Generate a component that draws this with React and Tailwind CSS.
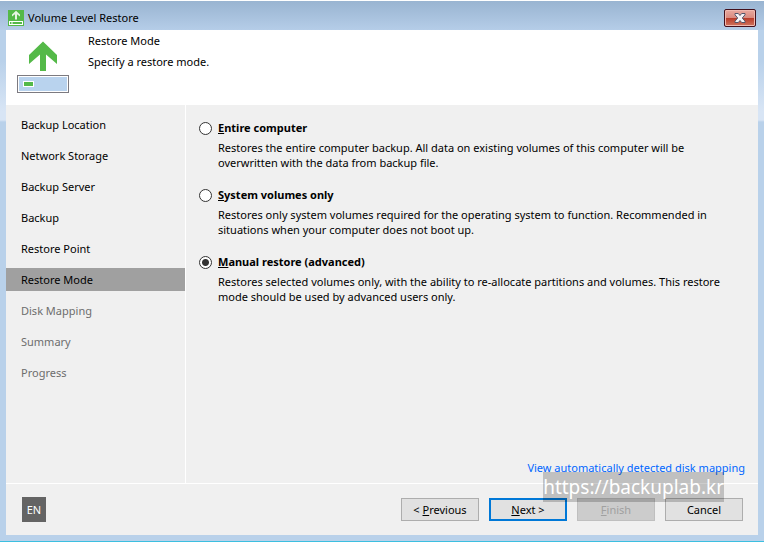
import { useState } from "react";

const STEPS = [
  { label: "Backup Location" },
  { label: "Network Storage" },
  { label: "Backup Server" },
  { label: "Backup" },
  { label: "Restore Point" },
  { label: "Restore Mode", current: true },
  { label: "Disk Mapping", pending: true },
  { label: "Summary", pending: true },
  { label: "Progress", pending: true },
];

const MODES = [
  {
    id: "entire",
    accessKey: "E",
    rest: "ntire computer",
    lines: [
      "Restores the entire computer backup. All data on existing volumes of this computer will be",
      "overwritten with the data from backup file.",
    ],
  },
  {
    id: "system",
    accessKey: "S",
    rest: "ystem volumes only",
    lines: [
      "Restores only system volumes required for the operating system to function. Recommended in",
      "situations when your computer does not boot up.",
    ],
  },
  {
    id: "manual",
    accessKey: "M",
    rest: "anual restore (advanced)",
    lines: [
      "Restores selected volumes only, with the ability to re-allocate partitions and volumes. This restore",
      "mode should be used by advanced users only.",
    ],
  },
];

const AppIcon = () => (
  <svg width="16" height="16" viewBox="0 0 16 16" aria-hidden="true">
    <rect width="16" height="16" fill="#54b948" />
    <path d="M8 0.8L12 4.6V6.6L9 4.2V9.5H7V4.2L4 6.6V4.6Z" fill="#e6f5e3" />
    <rect x="1.5" y="11.5" width="13" height="3" fill="none" stroke="#fff" />
    <rect x="3" y="12.5" width="2" height="1" fill="#fff" />
  </svg>
);

const RestoreIcon = () => (
  <svg width="52" height="52" viewBox="0 0 52 52" aria-hidden="true">
    <path d="M26 0.5L40 14V23L29 13.5V30H23V13.5L12 23V14Z" fill="#54b948" />
    <rect x="0.5" y="34.5" width="51" height="17" fill="#fff" stroke="#7c7a80" />
    <rect x="2" y="36" width="48" height="14" fill="#b9d3ee" />
    <rect x="6.5" y="40.5" width="10" height="5" fill="#54b948" stroke="#fff" />
  </svg>
);

const CloseIcon = () => (
  <svg width="12" height="10" viewBox="0 0 12 10" aria-hidden="true">
    <path
      d="M1 0.5H4.3L6 2.5L7.7 0.5H11V1.8L8.3 5L11 8.2V9.5H7.7L6 7.5L4.3 9.5H1V8.2L3.7 5L1 1.8Z"
      fill="#f4f4f6"
      stroke="#52566b"
    />
  </svg>
);

const WizardButton = ({ primary, disabled, children }) => {
  let look = "border border-[#adadad] bg-[#e1e1e1] text-black";
  if (primary) look = "border-2 border-[#0078d7] bg-[#e1e1e1] text-black";
  if (disabled) look = "border border-[#bfbfbf] bg-[#cccccc] text-[#a0a0a0]";

  return (
    <button
      type="button"
      disabled={disabled}
      className={`flex h-[23px] w-[78px] items-center justify-center whitespace-pre ${look}`}
    >
      {children}
    </button>
  );
};

const App = () => {
  const [mode, setMode] = useState("manual");

  return (
    <div className="flex min-h-screen flex-col border-t border-b border-t-white border-b-[#3cbfe0] bg-[#b9d1ea] bg-[linear-gradient(#b9d1ea_60px,#d8e5f5_110px,#d8e5f5_119px,#b9d1ea_121px)] px-1.5 pb-1.5 font-['Noto_Sans',sans-serif] text-[11px] leading-4 text-black">
      <header className="-mx-1.5 flex h-[29px] items-center justify-between bg-linear-to-b from-[#99b4d1] to-[#b5cde8] pt-[5px] pr-2 pl-2">
        <div className="flex items-center gap-1">
          <AppIcon />
          <h1>Volume Level Restore</h1>
        </div>
        <button
          type="button"
          aria-label="Close"
          className="flex h-[18px] w-8 items-center justify-center rounded-[2px] border border-[#43101c] bg-[linear-gradient(#e9a99f,#d98b80_48%,#b83a28_50%,#d0755f)] inset-ring inset-ring-[#f0b9b0]"
        >
          <CloseIcon />
        </button>
      </header>

      <section className="flex h-[75px] shrink-0 gap-[19px] bg-white pt-[3px] pl-[11px]">
        <div className="pt-2">
          <RestoreIcon />
        </div>
        <div className="flex flex-col gap-[5px]">
          <h2>Restore Mode</h2>
          <p>Specify a restore mode.</p>
        </div>
      </section>

      <div className="flex grow bg-[#f0f0f0]">
        <nav className="w-[180px] shrink-0 border-r border-white pt-2">
          <ol className="flex flex-col gap-2">
            {STEPS.map((step) => (
              <li
                key={step.label}
                aria-current={step.current ? "step" : undefined}
                className={`flex h-[23px] items-center pl-[15px] ${
                  step.current ? "bg-[#a0a0a0]" : ""
                } ${step.pending ? "text-[#6d6d6d]" : ""}`}
              >
                {step.label}
              </li>
            ))}
          </ol>
        </nav>

        <main className="flex grow flex-col justify-between pt-[15px] pr-[13px] pb-[7px] pl-[13px]">
          <div className="flex flex-col gap-[17px]">
            {MODES.map((m) => (
              <div key={m.id}>
                <label className="flex items-center gap-1.5 font-bold">
                  <input
                    type="radio"
                    name="mode"
                    value={m.id}
                    checked={mode === m.id}
                    onChange={() => setMode(m.id)}
                    className="size-[13px] appearance-none rounded-full border border-[#333] bg-white checked:bg-[radial-gradient(#333_3px,#fff_4px)]"
                  />
                  <span>
                    <u>{m.accessKey}</u>
                    {m.rest}
                  </span>
                </label>
                <p className="mt-1 pl-[19px] leading-[15px]">
                  {m.lines[0]}
                  <br />
                  {m.lines[1]}
                </p>
              </div>
            ))}
          </div>
          <a href="#mapping" className="self-end text-[#0066ff]">
            View automatically detected disk mapping
          </a>
        </main>
      </div>

      <footer className="relative flex h-[52px] shrink-0 items-center justify-between border-t border-white bg-[#f0f0f0] pr-[15px] pl-4">
        <button type="button" className="h-[25px] w-6 bg-[#646464] text-white">
          EN
        </button>
        <div className="flex gap-2.5">
          <WizardButton>
            {"< "}
            <u>P</u>revious
          </WizardButton>
          <WizardButton primary>
            <u>N</u>ext &gt;
          </WizardButton>
          <WizardButton disabled>
            <u>F</u>inish
          </WizardButton>
          <WizardButton>Cancel</WizardButton>
        </div>
        <span className="pointer-events-none absolute -top-3 right-[34px] bg-black/20 text-[19px] leading-[30px] text-white">
          https://backuplab.kr
        </span>
      </footer>
    </div>
  );
};

export default App;
